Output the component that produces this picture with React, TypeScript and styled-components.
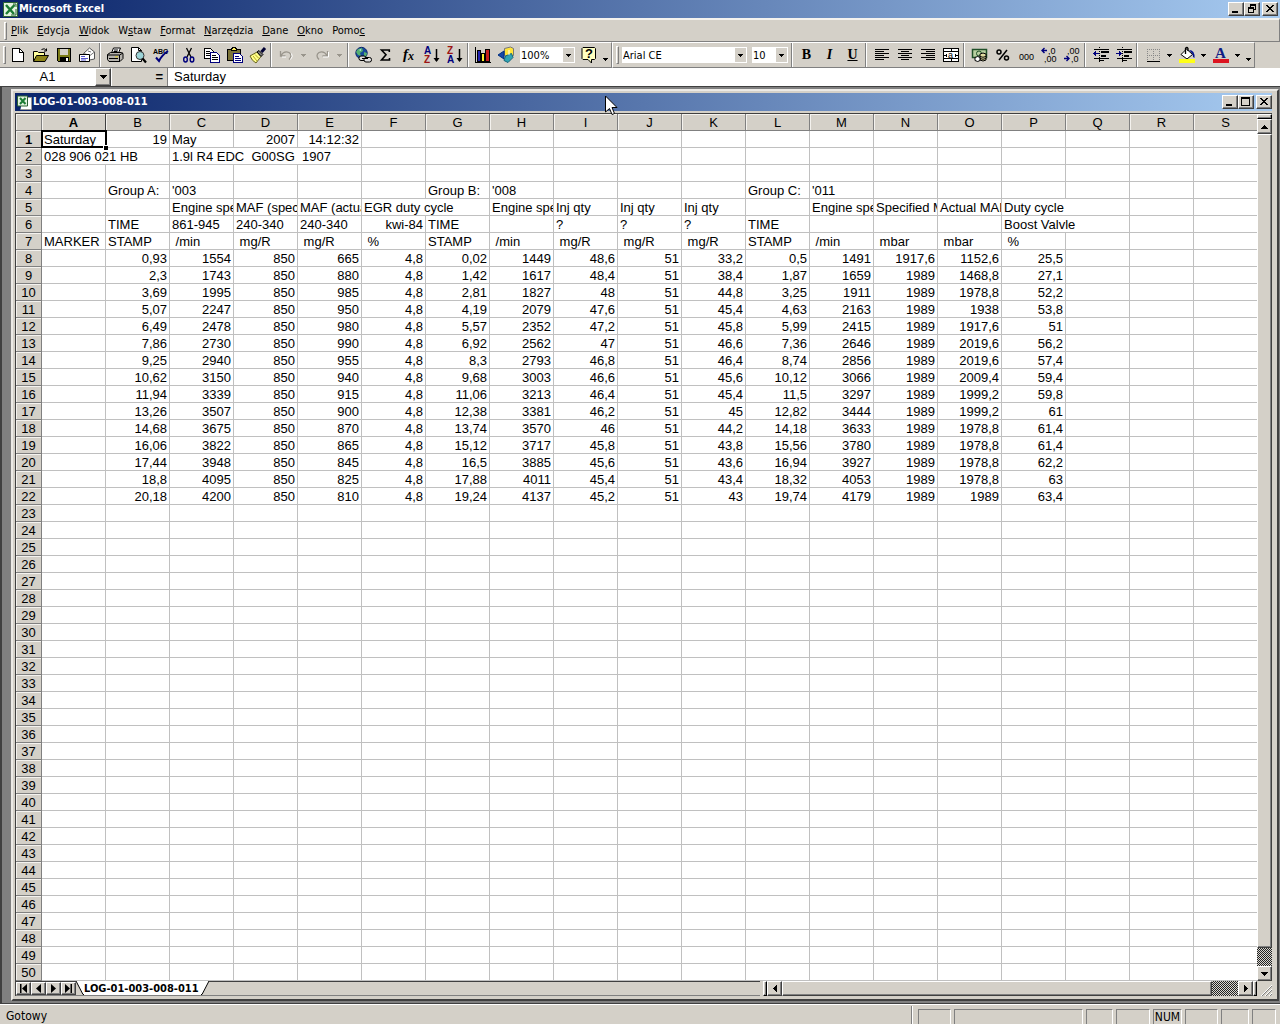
import React from "react";
import styled, { createGlobalStyle, css } from "styled-components";

const face = "#d4d0c8";
const shade = "#808080";
const dark = "#404040";
const uiFont = '"DejaVu Sans Condensed", "DejaVu Sans", sans-serif';
const sheetFont = '"Liberation Sans", Arial, sans-serif';

const GlobalStyle = createGlobalStyle`
  *, *::before, *::after { box-sizing: border-box; }
  body { margin: 0; background: ${face}; color: #000; font: 11px/13px ${uiFont}; }
  button, select, input { font: inherit; color: inherit; margin: 0; padding: 0; border: 0; border-radius: 0; background: none; }
  svg { display: block; flex: none; }
`;

const Desktop = styled.div`
  display: flex;
  flex-direction: column;
  min-height: 100vh;
  overflow: hidden;
`;

const TitleBar = styled.header<{ $child?: boolean }>`
  display: flex;
  align-items: center;
  height: 18px;
  padding: 0 ${(p) => (p.$child ? 0 : 2)}px 0 ${(p) => (p.$child ? 2 : 3)}px;
  gap: 1px;
  background: linear-gradient(90deg, #0a246a, #a6caf0);
  color: #fff;
`;

const Title = styled.h1`
  flex: 1;
  margin: 0;
  font: bold 11px/16px ${uiFont};
  white-space: nowrap;
`;

const raised = css`
  border: 1px solid;
  border-color: #fff ${dark} ${dark} #fff;
  box-shadow: inset -1px -1px ${shade};
  background: ${face};
`;

const WindowButtons = styled.div`
  display: flex;
  button:last-child { margin-left: 2px; }
`;

const WindowButton = styled.button`
  ${raised}
  display: grid;
  place-items: center;
  width: 16px;
  height: 14px;
  color: #000;
`;

const MenuBar = styled.nav`
  display: flex;
  align-items: center;
  height: 24px;
  padding-left: 7px;
  border-top: 2px solid #f4f2ee;
  border-right: 1px solid ${shade};
  border-bottom: 1px solid ${shade};
`;

const Grip = styled.span`
  width: 3px;
  height: 18px;
  margin-left: -3px;
  border: 1px solid;
  border-color: #fff ${shade} ${shade} #fff;
`;

const MenuItem = styled.button`
  padding: 0 5px 0 4px;
  line-height: 18px;
  white-space: nowrap;
  &:hover { background: #e4e0d8; }
`;

const ToolRow = styled.div`
  display: flex;
  height: 26px;
`;

const Toolbar = styled.div`
  display: flex;
  align-items: center;
  padding-left: 6px;
  border-top: 1px solid #fff;
  border-right: 1px solid ${shade};
  border-bottom: 1px solid ${shade};
  & + & { border-left: 1px solid #fff; }
`;

const Tool = styled.button`
  display: grid;
  place-items: center;
  width: 23px;
  height: 22px;
  &:hover { box-shadow: inset 1px 1px #fff, inset -1px -1px ${shade}; }
`;

const Letter = styled.span<{ $kind: "bold" | "italic" | "under" }>`
  font: ${(p) => (p.$kind === "italic" ? "italic " : "")}bold 14px/16px "Liberation Serif", serif;
  text-decoration: ${(p) => (p.$kind === "under" ? "underline" : "none")};
`;

const Drop = styled.button<{ $narrow?: boolean; $low?: boolean; $off?: boolean }>`
  display: grid;
  place-items: center;
  width: ${(p) => (p.$narrow ? 11 : 13)}px;
  height: 22px;
  padding-top: ${(p) => (p.$low ? 9 : 0)}px;
  color: ${(p) => (p.$off ? "#99958c" : "#000")};
`;

const Divider = styled.span<{ $wide?: boolean }>`
  width: ${(p) => (p.$wide ? 6 : 5)}px;
  height: 24px;
  background: linear-gradient(90deg, transparent 1px, ${shade} 1px, ${shade} 2px, #fff 2px, #fff 3px, transparent 3px);
`;

const Combo = styled.label<{ $w: number }>`
  display: flex;
  width: ${(p) => p.$w}px;
  height: 16px;
  margin: 0 2px 0 3px;
  padding: 1px;
  background: #fff;
  select {
    flex: 1;
    min-width: 0;
    appearance: none;
    outline: 0;
  }
`;

const ComboArrow = styled.span`
  display: grid;
  place-items: center;
  width: 11px;
  background: ${face};
  pointer-events: none;
`;

const FormulaBar = styled.div`
  display: flex;
  height: 18px;
  background: #fff;
  font: 13px/16px ${sheetFont};
`;

const NameBox = styled.input`
  width: 95px;
  text-align: center;
  background: #fff;
  outline: 0;
`;

const NameDrop = styled.button`
  ${raised}
  display: grid;
  place-items: center;
  width: 16px;
`;

const EqualsButton = styled.button`
  width: 57px;
  padding-right: 4px;
  text-align: right;
  font-weight: bold;
  background: ${face};
  border-right: 1px solid ${shade};
  border-left: 1px solid #fff;
`;

const FormulaInput = styled.input`
  flex: 1;
  min-width: 0;
  padding-left: 6px;
  outline: 0;
`;

const Workspace = styled.main`
  position: relative;
  flex: 1;
  padding: 2px 1px 2px 9px;
  background: ${shade};
  border: solid ${dark};
  border-width: 1px 0 1px 2px;
`;

const Child = styled.section`
  padding: 2px 5px 2px 2px;
  background: ${face};
  border: 2px solid;
  border-color: #eceae6 ${dark} ${dark} #eceae6;
`;

const Client = styled.div`
  margin: 2px 0 1px 0;
  border-top: 1px solid ${dark};
  border-left: 1px solid ${dark};
`;

const GridArea = styled.div`
  display: flex;
`;

const GridPane = styled.div`
  flex: 1;
  min-width: 0;
  overflow: hidden;
  background: #fff;
`;

const Sheet = styled.table`
  width: 1242px;
  table-layout: fixed;
  border-collapse: separate;
  border-spacing: 0;
  font: 13px/15px ${sheetFont};
  col:first-child { width: 26px; }
  th, td { padding: 1px 2px 0; white-space: pre; }
`;

const Head = styled.th<{ $on?: boolean }>`
  font-weight: ${(p) => (p.$on ? "bold" : "normal")};
  text-align: center;
  background: ${face};
  border-right: 1px solid ${(p) => (p.$on ? dark : shade)};
  border-bottom: 1px solid ${(p) => (p.$on ? dark : shade)};
  box-shadow: inset 1px 1px #f4f2ee;
`;

const Cell = styled.td<{ $right?: boolean }>`
  overflow: hidden;
  text-align: ${(p) => (p.$right ? "right" : "left")};
  border-right: 1px solid #c0c0c0;
  border-bottom: 1px solid #c0c0c0;
`;

const ActiveCell = styled(Cell)`
  position: relative;
  overflow: visible;
  &::before {
    content: "";
    position: absolute;
    inset: -1px -2px -1px -1px;
    border: 2px solid #000;
  }
  &::after {
    content: "";
    position: absolute;
    right: -3px;
    bottom: -3px;
    width: 5px;
    height: 5px;
    background: #000;
    border: solid #fff;
    border-width: 1px 0 0 1px;
  }
`;

const VScroll = styled.div`
  display: flex;
  flex-direction: column;
  width: 15px;
  background: ${face};
`;

const SplitBox = styled.span<{ $side?: boolean }>`
  ${raised}
  flex: none;
  width: ${(p) => (p.$side ? "4px" : "auto")};
  height: ${(p) => (p.$side ? "auto" : "5px")};
  border-color: #fff #000 #000 #fff;
`;

const ArrowButton = styled.button`
  ${raised}
  display: grid;
  place-items: center;
  flex: none;
  width: 15px;
  height: 15px;
`;

const Thumb = styled.div`
  ${raised}
  flex: 1;
`;

const Track = styled.div<{ $w?: number; $h?: number }>`
  flex: none;
  width: ${(p) => (p.$w ? p.$w + "px" : "auto")};
  height: ${(p) => (p.$h ? p.$h + "px" : "auto")};
  background: repeating-conic-gradient(#222 0 25%, #d8d6d0 0 50%) 0 0 / 2px 2px;
`;

const BottomBar = styled.div`
  display: grid;
  grid-template-columns: minmax(0, 1fr) 494px 15px;
  height: 15px;
`;

const Tabs = styled.div`
  display: flex;
  margin-right: 3px;
  border-top: 1px solid ${dark};
  border-bottom: 1px solid ${shade};
  button { height: 13px; }
`;

const SheetTab = styled.button`
  display: flex;
  margin-top: -1px;
  font: bold 11px/15px ${uiFont};
  white-space: nowrap;
`;

const TabName = styled.span`
  height: 14px;
  padding: 0 2px 0 0;
  background: #fff;
`;

const HScroll = styled.div`
  display: flex;
`;

const StatusBar = styled.footer`
  display: flex;
  height: 21px;
  padding: 4px 4px 0 6px;
  gap: 3px;
  border-top: 1px solid #fff;
  font: 12px/14px ${uiFont};
`;

const StatusText = styled.span`
  flex: 1;
`;

const Panel = styled.span<{ $w: number }>`
  width: ${(p) => p.$w}px;
  text-align: center;
  border: solid;
  border-width: 1px 1px 0 1px;
  border-color: ${shade} #fff #fff ${shade};
`;

const StatusSplit = styled.span`
  width: 2px;
  margin: -3px 2px 0 0;
  border-left: 1px solid ${shade};
  border-right: 1px solid #fff;
`;

const Pointer = styled.svg`
  position: absolute;
  left: 603px;
  top: 8px;
  z-index: 3;
`;

const Arrow = ({ dir = "down", size = 5 }: { dir?: string; size?: number }) => {
  const paths: Record<string, string> = {
    down: "M0 0h7v1h-1v1h-1v1h-1v1h-1v-1h-1v-1h-1v-1h-1z",
    small: "M0 0h5v1h-1v1h-1v1h-1v-1h-1v-1h-1z",
    up: "M0 4h7v-1h-1v-1h-1v-1h-1v-1h-1v1h-1v1h-1v1h-1z",
    left: "M4 0v7h-1v-1h-1v-1h-1v-1h-1v-1h1v-1h1v-1h1v-1z",
    right: "M0 0v7h1v-1h1v-1h1v-1h1v-1h-1v-1h-1v-1h-1v-1z",
  };
  const side = dir === "left" || dir === "right";
  const w = side ? 4 : size;
  const h = side ? 7 : size === 5 ? 3 : 4;
  return (
    <svg width={w} height={h} viewBox={`0 0 ${w} ${h}`} shapeRendering="crispEdges" fill="currentColor" aria-hidden="true">
      <path d={paths[size === 5 ? "small" : dir]} />
    </svg>
  );
};

const I = ({ children, soft }: { children: React.ReactNode; soft?: boolean }) => (
  <svg width="18" height="18" viewBox="0 0 18 18" fill="none" stroke="#000" shapeRendering={soft ? "auto" : "crispEdges"} aria-hidden="true">
    {children}
  </svg>
);

const lines = (rows: number[][]) => rows.map(([x, y, w], i) => <path key={i} d={`M${x} ${y}.5h${w}`} />);
const gText = { stroke: "none", fill: "#000", fontFamily: "Liberation Sans, sans-serif" };

const icons: Record<string, React.ReactNode> = {
  new: <I><path fill="#fff" d="M3.5 2.5h7l4 4v9h-11z" /><path d="M10.5 2.5v4h4" /></I>,
  open: <I soft><path fill="#ffff9c" d="M1.5 15V5.500h4l1 1h6v3" /><path fill="#8c8418" d="M1.500 15.500l3-6h12l-3.500 6z" /><path d="M9.500 3.500q3-2 5 1m0-2v2.500h-2.500" /></I>,
  save: <I><path fill="#7c7c18" d="M2.500 2.500h13v13h-12l-1-1z" /><path stroke="none" fill="#d4d0c8" d="M5 3h8v6H5z" /><path stroke="none" fill="#000" d="M5 11h9v5H5z" /><path stroke="none" fill="#fff" d="M11 12h2v3h-2z" /></I>,
  mail: <I soft><path fill="#fff" stroke="#555" d="M5.500 7.500l6-5.500 5 4v7l-5 1z" /><path stroke="#777" d="M6 7.500l6 2 4.500-3.500M10 5l3 1" /><path fill="#fff" d="M1.500 8.500h10v7h-10z" /><path stroke="#55c" d="M3 10.500h4M3 12.500h7M3 14h5" /></I>,
  print: <I soft><path fill="#fff" d="M5.500 7l2-5h7l-2 5z" /><path d="M8 4h4M7.500 5.500h4" /><path fill="#b5b2ac" d="M1.500 8.500l3-2h11l1.500 1v5l-3 3h-11l-1.500-2z" /><path d="M1.500 9h12v6M13.500 9l3.500-2M3 12.500h9" /><path stroke="#dc2" d="M9 10.800h3" /></I>,
  preview: <I soft><path fill="#fff" d="M2.500 1.500h7l3 3v11h-10z" /><path d="M9.500 1.500v3h3" /><circle cx="11" cy="9.500" r="4" fill="#9cd4d8" stroke="#333" /><path strokeWidth="2.200" d="M13.500 12.500l3.500 4" /></I>,
  spell: <I soft><text {...gText} fontWeight="bold" x="1" y="8" fontSize="7">ABC</text><path stroke="#00007c" strokeWidth="2" d="M4 11.500l3 3.500q3-6 9-10" /></I>,
  cut: <I soft><path strokeWidth="1.300" d="M6.500 2l4.500 9M11.500 2L7 11" /><ellipse cx="5.500" cy="13.500" rx="1.800" ry="2.500" stroke="#00007c" strokeWidth="1.400" /><ellipse cx="12" cy="13.500" rx="1.800" ry="2.500" stroke="#00007c" strokeWidth="1.400" /></I>,
  copy: <I><path fill="#fff" d="M1.500 2.500h6l3 3v7h-9z" /><path d="M3 5.500h4M3 7.500h5M3 9.500h5" /><path fill="#fff" stroke="#00007c" d="M7.500 6.500h6l3 3v7h-9z" /><path d="M9 9.500h4M9 11.500h6M9 13.500h6" /></I>,
  paste: <I><path fill="#7c7438" d="M1.500 3.500h13v11h-13z" /><path fill="#ffef60" d="M5.500 4.500v-2h1v-1h3v1h1v2z" /><path fill="#fff" stroke="#00007c" d="M7.500 7.500h6l3 3v6h-9z" /><path stroke="#00007c" d="M9 10.500h4M9 12.500h6M9 14.500h6" /></I>,
  brush: <I soft><path fill="#ffff8c" stroke="#66621c" d="M1 10l7-4 4 4.500-5 6.500q-4-2-6-7z" /><path stroke="#b5a820" d="M4 10l4 5M6 8.500l4 4" /><path fill="#777" d="M8 6l2-1.500 4 4L12 10.500z" /><path strokeWidth="3" stroke="#003" d="M12.500 6L16 2" /></I>,
  undo: <I soft><path stroke="#99958c" strokeWidth="1.300" d="M3.500 5v5h5M4 9.500q3-5 8-3 4 3 0 7" /><path stroke="#fff" d="M5 11h4M13.500 13.500q3-3 1-6" /></I>,
  redo: <I soft><path stroke="#99958c" strokeWidth="1.300" d="M14.500 5v5h-5M14 9.500q-3-5-8-3-4 3 0 7" /><path stroke="#fff" d="M10 11h5.500V6" /></I>,
  link: <I soft><circle cx="7.500" cy="7" r="5.700" fill="#164a9c" stroke="#0a246a" /><path stroke="none" fill="#55b070" d="M4 3l4-1 1 3-3 2 1 3-3-1-2-3zM10 6l3 1-1 4-2-1z" /><path stroke="none" fill="#bfe4f4" d="M5 4l2-1v2z" /><rect x="5" y="10" width="7" height="4.500" rx="2" fill="#ddd" /><rect x="10" y="11.500" width="7.500" height="4.500" rx="2" fill="#ddd" /><path d="M8 12.500h6" /></I>,
  sum: <I soft><path strokeWidth="1.600" d="M12.300 6V4H4.500l4.500 4.800L4.500 14h8v-2" /></I>,
  fx: <I soft><text {...gText} fontFamily="Liberation Serif, serif" fontStyle="italic" fontWeight="bold" x="3" y="13" fontSize="15">f</text><text {...gText} fontFamily="Liberation Serif, serif" fontStyle="italic" fontWeight="bold" x="8" y="14" fontSize="12">x</text></I>,
  az: <I soft><text {...gText} fill="#00007c" fontWeight="bold" x="1" y="8" fontSize="10">A</text><text {...gText} fill="#9c1414" fontWeight="bold" x="1" y="17" fontSize="10">Z</text><path d="M13.500 3v12" strokeWidth="1.500" /><path stroke="none" fill="#000" d="M10.500 12h6l-3 4z" /></I>,
  za: <I soft><text {...gText} fill="#9c1414" fontWeight="bold" x="1" y="8" fontSize="10">Z</text><text {...gText} fill="#00007c" fontWeight="bold" x="1" y="17" fontSize="10">A</text><path d="M13.500 3v12" strokeWidth="1.500" /><path stroke="none" fill="#000" d="M10.500 12h6l-3 4z" /></I>,
  chart: <I><path d="M1.500 1v15.500H17" /><path fill="#2424b0" d="M3.500 4.500h3v11h-3z" /><path fill="#ffef30" d="M7.500 7.500h3v8h-3z" /><path fill="#c41c1c" d="M11.500 3.500h4v12h-4z" /></I>,
  draw: <I soft><path fill="#ffe438" stroke="#777" d="M7.500 2.500l6-1.500 3 1.500v7l-6 1-3-1z" /><path fill="#1848a8" stroke="#003080" d="M7 5L1 9l6 4z" /><path fill="#30a4b4" stroke="#146478" d="M8.500 10l6-2.500 1.500 4-5 5-4-2z" /><path stroke="#fff" d="M12 4v5" /></I>,
  help: <I soft><path fill="#ffffc0" d="M3 1.500h11.500l1 1v10l-1 1h-3v3.500l-3.500-3.500h-5l-1-1v-10z" /><text {...gText} fontWeight="bold" x="5" y="12" fontSize="13">?</text></I>,
  left: <I>{lines([[2, 3, 14], [2, 5, 9], [2, 7, 14], [2, 9, 9], [2, 11, 14], [2, 13, 9]])}</I>,
  center: <I>{lines([[2, 3, 14], [5, 5, 8], [2, 7, 14], [5, 9, 8], [2, 11, 14], [5, 13, 8]])}</I>,
  right: <I>{lines([[2, 3, 14], [7, 5, 9], [2, 7, 14], [7, 9, 9], [2, 11, 14], [7, 13, 9]])}</I>,
  merge: <I><path fill="#fff" d="M1.500 2.500h15v13h-15z" /><path d="M1 5.500h16M1 12.500h16M9.500 2v3M9.500 13v3" /><path d="M2 9.500h3M13 9.500h3M4.500 8v3M13.500 8v3" /><text {...gText} x="6" y="12" fontSize="9">a</text></I>,
  money: <I soft><path fill="#b8d0a0" stroke="#205028" strokeWidth="1.500" d="M1.500 3.500h14v8h-14z" /><circle cx="8" cy="7.500" r="2.500" stroke="#205028" /><path fill="#e0dca0" d="M9 8q3-2 6 0v6q-3 2-6 0z" /><path fill="#fff" d="M4 11.500q3-2 5 0v3q-2 2-5 0z" /><path d="M9 10.500q3 1.500 6 0M9 12.500q3 1.500 6 0" /></I>,
  percent: <I soft><circle cx="5" cy="6" r="2" strokeWidth="1.500" /><circle cx="12.500" cy="12" r="2" strokeWidth="1.500" /><path strokeWidth="1.500" d="M13 4L5 14" /></I>,
  zeros: <I soft><text {...gText} x="2" y="14" fontSize="9">000</text></I>,
  inc: <I soft><text {...gText} x="8" y="8" fontSize="9">,0</text><text {...gText} x="4" y="16" fontSize="9">,00</text><path stroke="#00007c" strokeWidth="1.400" d="M7 4.500H2M4.500 2L2 4.500 4.500 7" /></I>,
  dec: <I soft><text {...gText} x="4" y="8" fontSize="9">,00</text><text {...gText} x="8" y="16" fontSize="9">,0</text><path stroke="#00007c" strokeWidth="1.400" d="M1 12.500h5M3.500 10L6 12.500 3.500 15" /></I>,
  outdent: <I>{lines([[2, 3, 15], [9, 5, 8], [9, 6, 8], [9, 9, 5], [9, 10, 5], [2, 12, 15], [7, 14, 5]])}<path strokeDasharray="1 1" d="M7.500 1v16" /><path stroke="#00007c" d="M1 7.500h6M2.500 6v3M3.500 5v5" /></I>,
  indent: <I>{lines([[2, 3, 15], [9, 5, 8], [9, 6, 8], [9, 9, 5], [9, 10, 5], [2, 12, 15], [7, 14, 5]])}<path strokeDasharray="1 1" d="M7.500 1v16" /><path stroke="#00007c" d="M1 7.500h6M5.500 6v3M4.500 5v5" /></I>,
  borders: <I><path stroke="#888" strokeDasharray="1 1" d="M3 3.500h13M3 9.500h13M3.500 3v12M9.500 3v12M15.500 3v12" /><path d="M3 15.500h13" /></I>,
  fill: <I soft><path fill="#fff" d="M3 8.500L8.500 3l6 5.500-5.500 4.500z" /><path strokeWidth="1.300" d="M7.500 8V2.500q1.500-2 2.500 0V5" /><path stroke="none" fill="#00108c" d="M11 4q6 0 5.500 8-2-1-2-4z" /><path stroke="none" fill="#ffff18" d="M1 13h16v4H1z" /></I>,
  color: <I soft><text {...gText} fill="#101c84" fontFamily="Liberation Serif, serif" fontWeight="bold" x="3" y="12" fontSize="15">A</text><path stroke="none" fill="#dc1420" d="M1 13h16v4H1z" /></I>,
};

const T = ({ n, label }: { n: string; label: string }) => <Tool aria-label={label}>{icons[n]}</Tool>;

const ExcelLogo = ({ small }: { small?: boolean }) => (
  <svg width="15" height="15" viewBox="0 0 15 15" aria-hidden="true">
    {small && <path fill="#fff" stroke="#999" d="M5.500 2.500h9v12h-11" />}
    <path fill="#e4f4e0" stroke="#2c6434" d={small ? "M.5 1h10v10H.5z" : "M.5.5h14v14H.5z"} />
    <path fill="none" stroke="#1c7c34" strokeWidth={small ? 2 : 2.5} d={small ? "M3 3l5.500 6M8.500 3L3 9" : "M3 3l8 9M11.500 3L3 12"} />
    {!small && <path stroke="#2c6434" d="M8 13h5V7M10 2h3v3" fill="none" />}
  </svg>
);

const WinGlyph = ({ d }: { d: string }) => (
  <svg width="10" height="10" viewBox="0 0 10 10" fill="#000" shapeRendering="crispEdges" aria-hidden="true"><path fillRule="evenodd" d={d} /></svg>
);
const glyphs = {
  min: "M1 7h6v2H1z",
  max: "M0 0h9v9H0zM1 2v6h7V2z",
  restore: "M3 0h6v6H7v3H1V3h2zM4 2v1h3v2h1V2zM2 5v3h4V5z",
  close: "M1 1h2v1h1v1h2V2h1V1h2v1H8v1H7v1H6v1h1v1h1v1h1v1H7V7H6V6H4v1H3v1H1V7h1V6h1V5h1V4H3V3H2V2H1z",
};

const menus: [string, string, string][] = [
  ["", "P", "lik"], ["", "E", "dycja"], ["", "W", "idok"], ["W", "s", "taw"], ["", "F", "ormat"],
  ["", "N", "arzędzia"], ["", "D", "ane"], ["", "O", "kno"], ["Pomo", "c", ""],
];

type Item = { t: string; right?: boolean; span?: number };
const r = (t: string): Item => ({ t, right: true });
const l = (t: string, span = 1): Item => ({ t, span });
const columns = "ABCDEFGHIJKLMNOPQRS".split("");

const sheet: Record<number, Record<string, Item>> = {
  1: { A: l("Saturday"), B: r("19"), C: l("May"), D: r("2007"), E: r("14:12:32") },
  2: { A: l("028 906 021 HB", 2), C: l("1.9l R4 EDC  G00SG  1907", 3) },
  4: { B: l("Group A:"), C: l("'003"), G: l("Group B:"), H: l("'008"), L: l("Group C:"), M: l("'011") },
  5: {
    C: l("Engine speed"), D: l("MAF (specified)"), E: l("MAF (actual)"), F: l("EGR duty cycle", 2), H: l("Engine speed"),
    I: l("Inj qty"), J: l("Inj qty"), K: l("Inj qty"), M: l("Engine speed"), N: l("Specified MAP"), O: l("Actual MAP"), P: l("Duty cycle", 2),
  },
  6: {
    B: l("TIME"), C: l("861-945"), D: l("240-340"), E: l("240-340"), F: r("kwi-84"), G: l("TIME"),
    I: l("?"), J: l("?"), K: l("?"), L: l("TIME"), P: l("Boost Valvle", 2),
  },
  7: {
    A: l("MARKER"), B: l("STAMP"), C: l(" /min"), D: l(" mg/R"), E: l(" mg/R"), F: l(" %"), G: l("STAMP"), H: l(" /min"),
    I: l(" mg/R"), J: l(" mg/R"), K: l(" mg/R"), L: l("STAMP"), M: l(" /min"), N: l(" mbar"), O: l(" mbar"), P: l(" %"),
  },
};

const readings = `0,93 1554 850 665 4,8 0,02 1449 48,6 51 33,2 0,5 1491 1917,6 1152,6 25,5
2,3 1743 850 880 4,8 1,42 1617 48,4 51 38,4 1,87 1659 1989 1468,8 27,1
3,69 1995 850 985 4,8 2,81 1827 48 51 44,8 3,25 1911 1989 1978,8 52,2
5,07 2247 850 950 4,8 4,19 2079 47,6 51 45,4 4,63 2163 1989 1938 53,8
6,49 2478 850 980 4,8 5,57 2352 47,2 51 45,8 5,99 2415 1989 1917,6 51
7,86 2730 850 990 4,8 6,92 2562 47 51 46,6 7,36 2646 1989 2019,6 56,2
9,25 2940 850 955 4,8 8,3 2793 46,8 51 46,4 8,74 2856 1989 2019,6 57,4
10,62 3150 850 940 4,8 9,68 3003 46,6 51 45,6 10,12 3066 1989 2009,4 59,4
11,94 3339 850 915 4,8 11,06 3213 46,4 51 45,4 11,5 3297 1989 1999,2 59,8
13,26 3507 850 900 4,8 12,38 3381 46,2 51 45 12,82 3444 1989 1999,2 61
14,68 3675 850 870 4,8 13,74 3570 46 51 44,2 14,18 3633 1989 1978,8 61,4
16,06 3822 850 865 4,8 15,12 3717 45,8 51 43,8 15,56 3780 1989 1978,8 61,4
17,44 3948 850 845 4,8 16,5 3885 45,6 51 43,6 16,94 3927 1989 1978,8 62,2
18,8 4095 850 825 4,8 17,88 4011 45,4 51 43,4 18,32 4053 1989 1978,8 63
20,18 4200 850 810 4,8 19,24 4137 45,2 51 43 19,74 4179 1989 1989 63,4`;

readings.split("\n").forEach((row, i) => {
  sheet[i + 8] = {};
  row.split(" ").forEach((v, c) => { sheet[i + 8][columns[c + 1]] = r(v); });
});

const SheetRow = ({ n }: { n: number }) => {
  const cells: React.ReactNode[] = [];
  for (let c = 0; c < columns.length; c++) {
    const item = sheet[n]?.[columns[c]];
    const Kind = n === 1 && c === 0 ? ActiveCell : Cell;
    cells.push(<Kind key={c} $right={item?.right} colSpan={item?.span}>{item?.t}</Kind>);
    c += (item?.span ?? 1) - 1;
  }
  return <tr><Head scope="row" $on={n === 1}>{n}</Head>{cells}</tr>;
};

export default function App() {
  return (
    <Desktop>
      <GlobalStyle />
      <TitleBar>
        <ExcelLogo />
        <Title>Microsoft Excel</Title>
        <WindowButtons>
          <WindowButton aria-label="Minimalizuj"><WinGlyph d={glyphs.min} /></WindowButton>
          <WindowButton aria-label="Przywróć"><WinGlyph d={glyphs.restore} /></WindowButton>
          <WindowButton aria-label="Zamknij"><WinGlyph d={glyphs.close} /></WindowButton>
        </WindowButtons>
      </TitleBar>
      <MenuBar>
        <Grip />
        {menus.map(([a, u, b]) => <MenuItem key={a + u + b}>{a}<u>{u}</u>{b}</MenuItem>)}
      </MenuBar>
      <ToolRow>
        <Toolbar>
          <Grip />
          <T n="new" label="Nowy" /><T n="open" label="Otwórz" /><T n="save" label="Zapisz" /><T n="mail" label="E-mail" />
          <Divider />
          <T n="print" label="Drukuj" /><T n="preview" label="Podgląd wydruku" /><T n="spell" label="Pisownia" />
          <Divider />
          <T n="cut" label="Wytnij" /><T n="copy" label="Kopiuj" /><T n="paste" label="Wklej" /><T n="brush" label="Malarz formatów" />
          <Divider />
          <T n="undo" label="Cofnij" /><Drop $off aria-label="Lista cofnij"><Arrow /></Drop>
          <T n="redo" label="Ponów" /><Drop $off aria-label="Lista ponów"><Arrow /></Drop>
          <Divider />
          <T n="link" label="Hiperłącze" /><T n="sum" label="Autosumowanie" /><T n="fx" label="Wklej funkcję" />
          <T n="az" label="Sortuj rosnąco" /><T n="za" label="Sortuj malejąco" />
          <Divider />
          <T n="chart" label="Kreator wykresów" /><T n="draw" label="Rysowanie" />
          <Combo $w={55}><select aria-label="Powiększenie"><option>100%</option></select><ComboArrow><Arrow /></ComboArrow></Combo>
          <T n="help" label="Pomoc" /><Drop $narrow $low aria-label="Więcej przycisków"><Arrow /></Drop>
        </Toolbar>
        <Toolbar>
          <Grip />
          <Combo $w={125}><select aria-label="Czcionka"><option>Arial CE</option></select><ComboArrow><Arrow /></ComboArrow></Combo>
          <Combo $w={36}><select aria-label="Rozmiar czcionki"><option>10</option></select><ComboArrow><Arrow /></ComboArrow></Combo>
          <Divider />
          <Tool aria-label="Pogrubienie"><Letter $kind="bold">B</Letter></Tool>
          <Tool aria-label="Kursywa"><Letter $kind="italic">I</Letter></Tool>
          <Tool aria-label="Podkreślenie"><Letter $kind="under">U</Letter></Tool>
          <Divider $wide />
          <T n="left" label="Do lewej" /><T n="center" label="Wyśrodkuj" /><T n="right" label="Do prawej" /><T n="merge" label="Scal i wyśrodkuj" />
          <Divider $wide />
          <T n="money" label="Zapis walutowy" /><T n="percent" label="Zapis procentowy" /><T n="zeros" label="Zapis dziesiętny" />
          <T n="inc" label="Zwiększ dziesiętne" /><T n="dec" label="Zmniejsz dziesiętne" />
          <Divider $wide />
          <T n="outdent" label="Zmniejsz wcięcie" /><T n="indent" label="Zwiększ wcięcie" />
          <Divider $wide />
          <T n="borders" label="Obramowanie" /><Drop $narrow aria-label="Lista obramowań"><Arrow /></Drop>
          <T n="fill" label="Kolor wypełnienia" /><Drop $narrow aria-label="Lista wypełnień"><Arrow /></Drop>
          <T n="color" label="Kolor czcionki" /><Drop $narrow aria-label="Lista kolorów"><Arrow /></Drop>
          <Drop $narrow $low aria-label="Więcej przycisków"><Arrow /></Drop>
        </Toolbar>
      </ToolRow>
      <FormulaBar>
        <NameBox aria-label="Pole nazwy" defaultValue="A1" />
        <NameDrop aria-label="Lista nazw"><Arrow size={7} /></NameDrop>
        <EqualsButton aria-label="Edytuj formułę">=</EqualsButton>
        <FormulaInput aria-label="Formuła" defaultValue="Saturday" />
      </FormulaBar>
      <Workspace>
        <Child>
          <TitleBar $child>
            <ExcelLogo small />
            <Title as="h2">LOG-01-003-008-011</Title>
            <WindowButtons>
              <WindowButton aria-label="Minimalizuj arkusz"><WinGlyph d={glyphs.min} /></WindowButton>
              <WindowButton aria-label="Maksymalizuj arkusz"><WinGlyph d={glyphs.max} /></WindowButton>
              <WindowButton aria-label="Zamknij arkusz"><WinGlyph d={glyphs.close} /></WindowButton>
            </WindowButtons>
          </TitleBar>
          <Client>
            <GridArea>
              <GridPane>
                <Sheet>
                  <colgroup><col />{columns.map((c) => <col key={c} />)}</colgroup>
                  <thead><tr><Head />{columns.map((c) => <Head key={c} scope="col" $on={c === "A"}>{c}</Head>)}</tr></thead>
                  <tbody>{Array.from({ length: 50 }, (_, i) => <SheetRow key={i} n={i + 1} />)}</tbody>
                </Sheet>
              </GridPane>
              <VScroll>
                <SplitBox />
                <ArrowButton aria-label="W górę"><Arrow dir="up" size={7} /></ArrowButton>
                <Thumb />
                <Track $h={18} />
                <ArrowButton aria-label="W dół"><Arrow size={7} /></ArrowButton>
              </VScroll>
            </GridArea>
            <BottomBar>
              <Tabs>
                <ArrowButton aria-label="Pierwszy arkusz"><svg width="9" height="9" viewBox="0 0 9 9"><path d="M1 0h1.500v9H1zM8 0v9L3 4.500z" /></svg></ArrowButton>
                <ArrowButton aria-label="Poprzedni arkusz"><svg width="9" height="9" viewBox="0 0 9 9"><path d="M7 0v9L2 4.500z" /></svg></ArrowButton>
                <ArrowButton aria-label="Następny arkusz"><svg width="9" height="9" viewBox="0 0 9 9"><path d="M2 0v9l5-4.500z" /></svg></ArrowButton>
                <ArrowButton aria-label="Ostatni arkusz"><svg width="9" height="9" viewBox="0 0 9 9"><path d="M1 0v9l5-4.500zM6.500 0H8v9H6.500z" /></svg></ArrowButton>
                <SheetTab>
                  <svg width="8" height="14" viewBox="0 0 8 14"><path fill="#fff" d="M0 0h8v14H7z" /><path stroke="#000" fill="none" d="M0 0l7 13.500h1" /></svg>
                  <TabName>LOG-01-003-008-011</TabName>
                  <svg width="8" height="14" viewBox="0 0 8 14"><path fill="#fff" d="M0 0h8L1 14H0z" /><path stroke="#000" fill="none" d="M8 0L1 13.500H0" /></svg>
                </SheetTab>
              </Tabs>
              <HScroll>
                <SplitBox $side />
                <ArrowButton aria-label="W lewo"><Arrow dir="left" size={7} /></ArrowButton>
                <Thumb />
                <Track $w={26} />
                <ArrowButton aria-label="W prawo"><Arrow dir="right" size={7} /></ArrowButton>
                <SplitBox $side />
              </HScroll>
              <svg width="15" height="15" viewBox="0 0 15 15" aria-hidden="true"><path stroke="#808080" d="M5 15L15 5M9 15l6-6M13 15l2-2" /><path stroke="#fff" d="M4 15L15 4M8 15l7-7M12 15l3-3" /></svg>
            </BottomBar>
          </Client>
        </Child>
        <Pointer width="13" height="21" viewBox="0 0 13 21" aria-hidden="true"><path fill="#fff" stroke="#000" d="M.5 1v16l4-3.500 2.500 6 2.500-1-2.500-6H12z" /></Pointer>
      </Workspace>
      <StatusBar>
        <StatusText>Gotowy</StatusText>
        <StatusSplit />
        <Panel $w={33} /><Panel $w={129} /><Panel $w={27} /><Panel $w={34} /><Panel $w={29}>NUM</Panel><Panel $w={33} /><Panel $w={28} /><Panel $w={24} />
      </StatusBar>
    </Desktop>
  );
}
